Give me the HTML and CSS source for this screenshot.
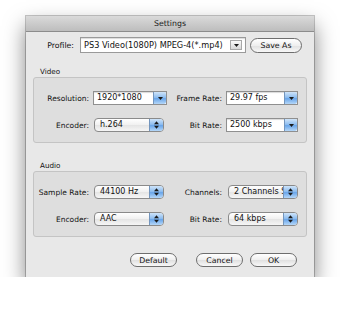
FILE: index.html
```html
<!DOCTYPE html>
<html>
<head>
    <meta charset="utf-8">
    <title>Settings</title>
    <link rel="stylesheet" href="styles.css">
</head>
<body>
    <div class="window">
        <div class="titlebar">Settings</div>

        <div class="profile-row">
            <span class="profile-label">Profile:</span>
            <div class="combo profile">
                <span class="value">PS3 Video(1080P) MPEG-4(*.mp4)</span>
                <span class="arrow gray">
                    <svg width="5" height="3" viewBox="0 0 5 3"><path d="M0 0H5L2.5 3Z" fill="#1a1a1a"/></svg>
                </span>
            </div>
            <button class="push save">Save As</button>
        </div>

        <div class="section-title">Video</div>
        <div class="group">
            <span class="label">Resolution:</span>
            <div class="combo">
                <span class="value">1920*1080</span>
                <span class="arrow blue">
                    <svg width="5" height="3" viewBox="0 0 5 3"><path d="M0 0H5L2.5 3Z" fill="#1a1a1a"/></svg>
                </span>
            </div>
            <span class="label">Frame Rate:</span>
            <div class="combo">
                <span class="value">29.97 fps</span>
                <span class="arrow blue">
                    <svg width="5" height="3" viewBox="0 0 5 3"><path d="M0 0H5L2.5 3Z" fill="#1a1a1a"/></svg>
                </span>
            </div>

            <span class="label">Encoder:</span>
            <div class="popup">
                <span class="value">h.264</span>
                <span class="arrow blue">
                    <svg width="5" height="8" viewBox="0 0 5 8"><path d="M0 3.3L2.5 0.3L5 3.3Z M0 4.7L2.5 7.7L5 4.7Z" fill="#1a1a1a"/></svg>
                </span>
            </div>
            <span class="label">Bit Rate:</span>
            <div class="combo">
                <span class="value">2500 kbps</span>
                <span class="arrow blue">
                    <svg width="5" height="3" viewBox="0 0 5 3"><path d="M0 0H5L2.5 3Z" fill="#1a1a1a"/></svg>
                </span>
            </div>
        </div>

        <div class="section-title audio">Audio</div>
        <div class="group">
            <span class="label">Sample Rate:</span>
            <div class="popup">
                <span class="value">44100 Hz</span>
                <span class="arrow blue">
                    <svg width="5" height="8" viewBox="0 0 5 8"><path d="M0 3.3L2.5 0.3L5 3.3Z M0 4.7L2.5 7.7L5 4.7Z" fill="#1a1a1a"/></svg>
                </span>
            </div>
            <span class="label">Channels:</span>
            <div class="popup right">
                <span class="value">2 Channels Stereo</span>
                <span class="arrow blue">
                    <svg width="5" height="8" viewBox="0 0 5 8"><path d="M0 3.3L2.5 0.3L5 3.3Z M0 4.7L2.5 7.7L5 4.7Z" fill="#1a1a1a"/></svg>
                </span>
            </div>

            <span class="label">Encoder:</span>
            <div class="popup">
                <span class="value">AAC</span>
                <span class="arrow blue">
                    <svg width="5" height="8" viewBox="0 0 5 8"><path d="M0 3.3L2.5 0.3L5 3.3Z M0 4.7L2.5 7.7L5 4.7Z" fill="#1a1a1a"/></svg>
                </span>
            </div>
            <span class="label">Bit Rate:</span>
            <div class="popup right">
                <span class="value">64 kbps</span>
                <span class="arrow blue">
                    <svg width="5" height="8" viewBox="0 0 5 8"><path d="M0 3.3L2.5 0.3L5 3.3Z M0 4.7L2.5 7.7L5 4.7Z" fill="#1a1a1a"/></svg>
                </span>
            </div>
        </div>

        <div class="actions">
            <button class="push default">Default</button>
            <button class="push">Cancel</button>
            <button class="push">OK</button>
        </div>
    </div>
</body>
</html>
```

FILE: styles.css
```css
body {
    margin: 0;
    background: #fff;
    font-family: "DejaVu Sans", sans-serif;
    color: #111;
}
.window {
    width: 288px;
    height: 261px;
    margin: 16px 0 0 26px;
    background: #e8e8e8;
    box-shadow: 0 10px 20px rgba(0, 0, 0, 0.5), 0 0 0 1px rgba(0, 0, 0, 0.22);
    display: flex;
    flex-direction: column;
}
.titlebar {
    height: 15px;
    line-height: 16px;
    border-bottom: 1px solid #8c8c8c;
    background: linear-gradient(#dadada, #bdbdbd);
    text-align: center;
    font-size: 7.8px;
    color: #1a1a1a;
}
.profile-row {
    display: flex;
    align-items: center;
    margin-top: 5px;
    padding-left: 19px;
}
.profile-label {
    width: 29px;
    margin-right: 6px;
    text-align: right;
    font-size: 7.8px;
}
.section-title {
    margin: 14px 0 1px 14px;
    font-size: 7.2px;
    line-height: 9px;
}
.section-title.audio {
    margin-top: 18px;
}
.group {
    margin: 0 7px;
    height: 66px;
    box-sizing: border-box;
    border: 1px solid #c4c4c4;
    border-radius: 3px;
    background: #dedede;
    padding-top: 13px;
    display: grid;
    grid-template-columns: 59px 74px 59px 72px;
    grid-template-rows: 14px 14px;
    row-gap: 13px;
    align-items: center;
}
.label {
    text-align: right;
    padding-right: 4px;
    font-size: 7.5px;
    white-space: nowrap;
}
.value {
    flex: 1;
    overflow: hidden;
    white-space: nowrap;
    font-size: 8px;
    line-height: 12px;
}
.combo {
    height: 14px;
    box-sizing: border-box;
    display: flex;
    border: 1px solid #8f8f8f;
    background: #fff;
    box-shadow: inset 0 1px 1px rgba(0, 0, 0, 0.15);
}
.combo .value {
    padding-left: 3px;
}
.combo.profile {
    width: 166px;
    height: 16px;
    border-color: #9a9a9a;
}
.combo.profile .value {
    line-height: 14px;
    font-size: 8.2px;
}
.arrow {
    display: flex;
    align-items: center;
    justify-content: center;
}
.arrow.gray {
    width: 10px;
    margin: 2px 3px 2px 0;
    border: 1px solid #a8a8a8;
    background: linear-gradient(#fafafa, #d8d8d8);
}
.arrow.blue {
    width: 12px;
    border-left: 1px solid #7395bd;
    background: linear-gradient(#cfe4f9, #8fbef0 45%, #6aa6ea 55%, #b5d7f8);
}
.combo .arrow.blue {
    border-radius: 0 2px 2px 0;
}
.popup {
    width: 70px;
    height: 14px;
    box-sizing: border-box;
    margin-left: 1px;
    display: flex;
    border: 1px solid #8a8a8a;
    border-radius: 4px;
    overflow: hidden;
    background: linear-gradient(#ffffff, #f0f0f0 50%, #e4e4e4 51%, #f6f6f6);
}
.popup.right {
    margin-left: 2px;
}
.popup .value {
    padding-left: 5px;
}
.popup .arrow.blue {
    width: 13px;
}
.push {
    appearance: none;
    width: 47px;
    height: 14px;
    padding: 0;
    border: 1px solid #6e6e6e;
    border-radius: 8px;
    background: linear-gradient(#ffffff, #efefef 50%, #e0e0e0 51%, #f8f8f8);
    font-family: "DejaVu Sans", sans-serif;
    font-size: 7.8px;
    color: #111;
}
.push.save {
    width: 52px;
    height: 15px;
    margin-left: 4px;
}
.actions {
    display: flex;
    justify-content: flex-end;
    gap: 7px;
    margin-top: 16px;
    padding-right: 17px;
}
.push.default {
    margin-right: 12px;
}
```
